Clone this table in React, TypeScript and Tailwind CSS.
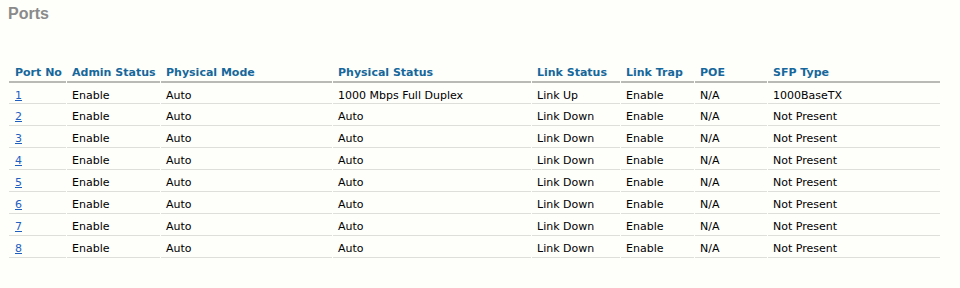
const columns = [
  { label: "Port No", width: "w-[57px]" },
  { label: "Admin Status", width: "w-[93px]" },
  { label: "Physical Mode", width: "w-[171px]" },
  { label: "Physical Status", width: "w-[198px]" },
  { label: "Link Status", width: "w-[88px]" },
  { label: "Link Trap", width: "w-[73px]" },
  { label: "POE", width: "w-[72px]" },
  { label: "SFP Type", width: "w-[172px]" },
];

const ports = [1, 2, 3, 4, 5, 6, 7, 8].map((n) => ({
  port: n,
  admin: "Enable",
  mode: "Auto",
  status: n === 1 ? "1000 Mbps Full Duplex" : "Auto",
  link: n === 1 ? "Link Up" : "Link Down",
  trap: "Enable",
  poe: "N/A",
  sfp: n === 1 ? "1000BaseTX" : "Not Present",
}));

export default function App() {
  return (
    <div className="w-[960px] h-[288px] bg-[#fefefb] overflow-hidden">
      <h1 className="pl-[8px] pt-[4px] text-[16px] leading-[20px] font-bold text-[#8a8a8a] font-['Liberation_Sans',Arial,sans-serif]">
        Ports
      </h1>

      <table className="mt-[36px] ml-[8px] w-[933px] table-fixed border-separate border-spacing-x-[1px] border-spacing-y-0 font-['DejaVu_Sans',Verdana,sans-serif] text-[11px]">
        <colgroup>
          {columns.map((c) => (
            <col key={c.label} className={c.width} />
          ))}
        </colgroup>
        <thead>
          <tr>
            {columns.map((c, i) => (
              <th
                key={c.label}
                className={`h-[23px] text-left align-bottom leading-[17px] font-bold text-[#16689b] border-b-2 border-[#b9b9b6] whitespace-nowrap ${i === 0 ? "pl-[6px]" : "pl-[5px]"}`}
              >
                {c.label}
              </th>
            ))}
          </tr>
        </thead>
        <tbody>
          {ports.map((p, idx) => {
            const h = idx === 0 ? "h-[21px] leading-[15px]" : "h-[22px] leading-[16px]";
            const cell = `${h} pl-[5px] align-bottom text-black border-b border-[#dededb] whitespace-nowrap`;
            return (
              <tr key={p.port}>
                <td className={`${h} pl-[6px] align-bottom border-b border-[#dededb]`}>
                  <a href="#" className="text-[#1f5fbf] underline">
                    {p.port}
                  </a>
                </td>
                <td className={cell}>{p.admin}</td>
                <td className={cell}>{p.mode}</td>
                <td className={cell}>{p.status}</td>
                <td className={cell}>{p.link}</td>
                <td className={cell}>{p.trap}</td>
                <td className={cell}>{p.poe}</td>
                <td className={cell}>{p.sfp}</td>
              </tr>
            );
          })}
        </tbody>
      </table>
    </div>
  );
}
